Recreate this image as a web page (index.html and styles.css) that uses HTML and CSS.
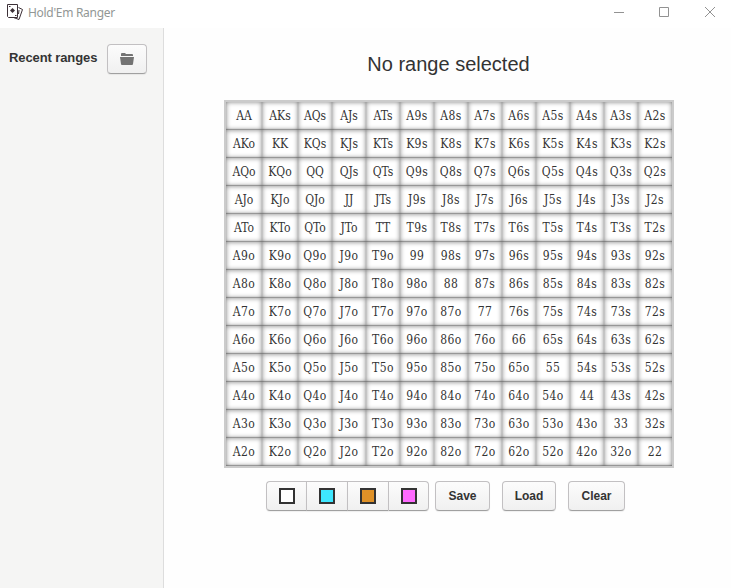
FILE: index.html
```
<!DOCTYPE html>
<html lang="en">
<head>
<meta charset="utf-8">
<title>Hold'Em Ranger</title>
<link rel="stylesheet" href="styles.css">
</head>
<body>
<header class="titlebar">
  <svg class="logo" width="18" height="18" viewBox="0 0 18 18" fill="none" stroke="#3c3037">
    <path d="M1.500 1.500H11.500V14.500H2.500L1.500 13.500Z"/>
    <path d="M12.500 4.500 16.500 6.500 13 16.500 7.500 14.500M13 7 12.500 11M3 3.500h1.500M9 12.500h1.500"/>
    <path d="M6.500 5 9 7.500 6.500 10 4 7.500Z" fill="#3c3037" stroke="none"/>
  </svg>
  <span class="app-name">Hold'Em Ranger</span>
  <svg class="controls" width="104" height="12" viewBox="0 0 104 12" fill="none" stroke="#929292">
    <path d="M0 6.500h10M45.500 1.500h9v9h-9zM91 1l10 10M101 1 91 11"/>
  </svg>
</header>
<div class="layout">
  <aside class="sidebar">
    <h2>Recent ranges</h2>
    <button class="btn folder" aria-label="Open folder">
      <svg width="14" height="12" viewBox="0 0 14 12" fill="#737373"><path d="M1 3V1q0-1 1-1h3l1 1h6q1 0 1 1v1zM0 4h14l-1 7q0 1-1 1H2q-1 0-1-1z"/></svg>
    </button>
  </aside>
  <main>
    <h1>No range selected</h1>
    <div class="grid" id="grid"></div>
    <div class="toolbar">
      <div class="swatches">
        <button class="btn"><i class="white"></i></button><button class="btn"><i class="cyan"></i></button><button class="btn"><i class="orange"></i></button><button class="btn"><i class="pink"></i></button>
      </div>
      <button class="btn save">Save</button>
      <button class="btn load">Load</button>
      <button class="btn clear">Clear</button>
    </div>
  </main>
</div>
<script src="grid.js"></script>
</body>
</html>
```
FILE: styles.css
```
* { box-sizing: border-box; }
body { margin: 0; width: 731px; height: 588px; overflow: hidden; background: #fefefe; color: #333; font-family: "Liberation Sans", Arial, sans-serif; }
.titlebar { height: 28px; display: flex; align-items: flex-start; background: #fff; }
.logo { margin: 3px 0 0 6px; }
.app-name { margin-left: 4px; width: 120px; color: #929795; font: 12px/26px "Noto Sans", sans-serif; letter-spacing: -.3px; white-space: nowrap; }
.controls { margin: 6px 13px 0 auto; }
.layout { display: flex; height: 560px; }
.sidebar { width: 164px; background: #f5f5f4; border-right: 1px solid #ddd; display: flex; align-items: flex-start; padding: 16px 0 0 9px; }
h2 { width: 98px; margin: 0; font-size: 13px; line-height: 28px; letter-spacing: -.1px; white-space: nowrap; }
.btn { height: 30px; padding: 0; border: 1px solid #c2c0c2; border-bottom-color: #a0a0a0; border-radius: 4px; background: linear-gradient(#fcfcfc, #f0f0f0); color: #333; font: bold 12px/28px "Liberation Sans", Arial, sans-serif; box-shadow: 0 1px 1px rgba(0, 0, 0, .06); }
.folder { width: 40px; }
.folder svg { display: block; margin: 0 auto; }
main { width: 567px; padding-top: 24px; }
h1 { margin: 0 0 24px; padding-left: 2px; text-align: center; font-weight: 400; font-size: 20px; line-height: 24px; }
.grid { width: 450px; height: 368px; margin-left: 60px; border: 2px solid #cbcbcb; display: grid; grid-template-columns: 36px 36px repeat(11, 34px); grid-template-rows: repeat(13, 28px); }
.cell { background: #fff; box-shadow: inset 0 0 5px rgba(0, 0, 0, .5), inset 0 -1px 1px rgba(0, 0, 0, .28); text-align: center; font: 12px/28px "DejaVu Serif Condensed", "DejaVu Serif", serif; }
.digits { letter-spacing: .4px; }
.toolbar { display: flex; margin: 13px 0 0 102px; }
.swatches { display: flex; width: 163px; margin-right: 6px; }
.swatches .btn { width: 41px; border-radius: 0; border-right-width: 0; display: flex; align-items: center; justify-content: center; }
.swatches .btn:first-child { width: 40px; border-radius: 4px 0 0 4px; }
.swatches .btn:last-child { border-right-width: 1px; border-radius: 0 4px 4px 0; }
i { width: 16px; height: 16px; border: 2px solid #333; }
.white { background: #fff; }
.cyan { background: #3ee7ff; }
.orange { background: #df9127; }
.pink { background: #ff6aff; }
.save { width: 55px; }
.load { width: 54px; margin-left: 12px; }
.clear { width: 57px; margin-left: 12px; }
```
FILE: grid.js
```
const ranks = "AKQJT98765432";
const grid = document.getElementById("grid");
for (let r = 0; r < 13; r++) {
  for (let c = 0; c < 13; c++) {
    const cell = document.createElement("div");
    cell.className = r > 4 || c > 4 ? "cell digits" : "cell";
    cell.textContent = r === c ? ranks[r] + ranks[r] : r < c ? ranks[r] + ranks[c] + "s" : ranks[c] + ranks[r] + "o";
    grid.append(cell);
  }
}
```
